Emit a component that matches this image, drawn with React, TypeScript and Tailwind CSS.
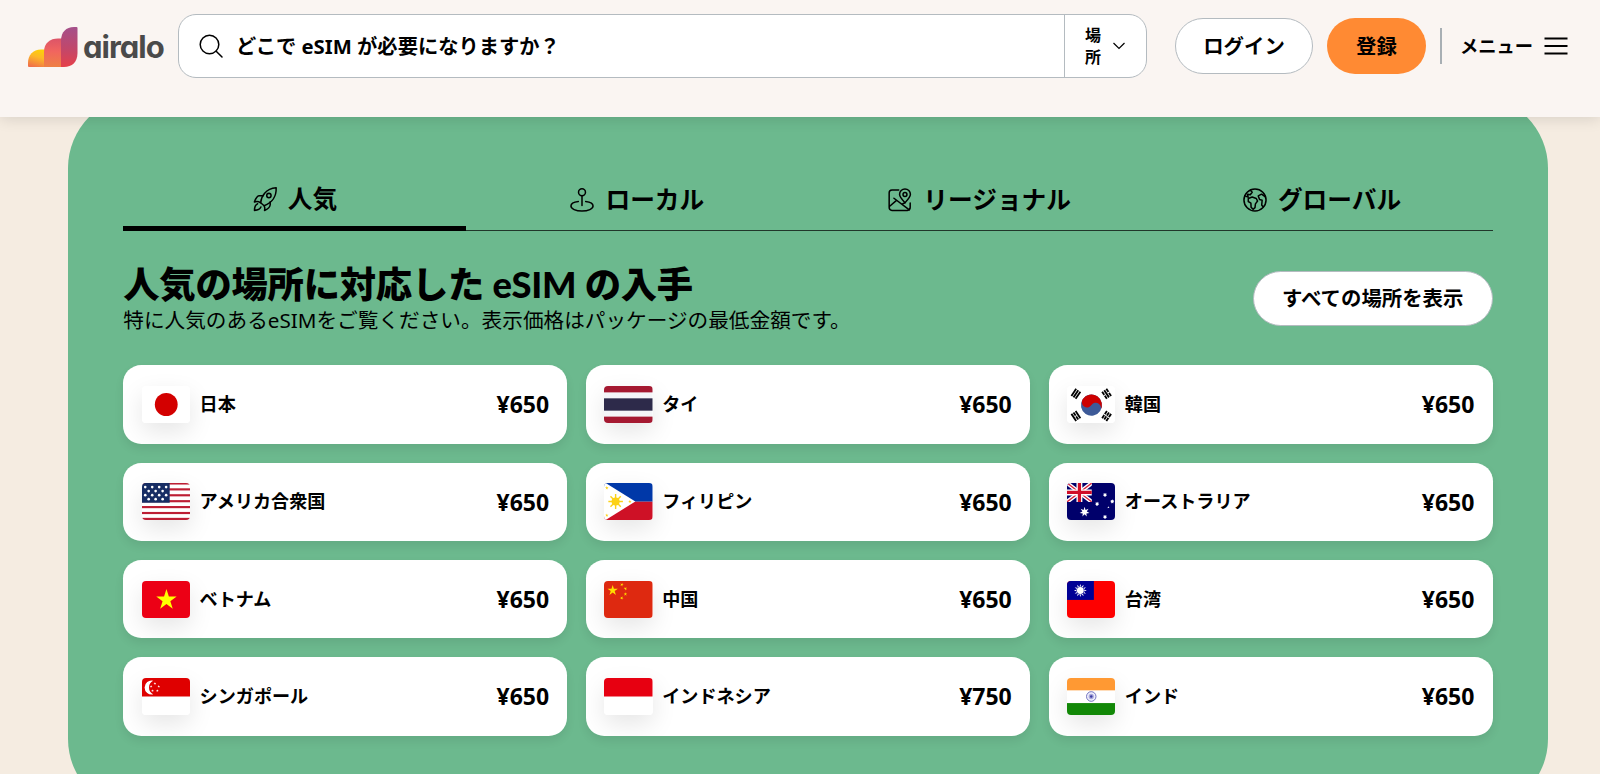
import type { ReactNode } from "react";

type Country = { name: string; price: string; flag: ReactNode };

function starPoints(cx: number, cy: number, r: number, n = 5, inner = 0.382, rotate = 0) {
  const pts: string[] = [];
  for (let i = 0; i < n * 2; i++) {
    const radius = i % 2 === 0 ? r : r * inner;
    const a = (Math.PI * i) / n - Math.PI / 2 + rotate;
    pts.push(`${(cx + radius * Math.cos(a)).toFixed(2)},${(cy + radius * Math.sin(a)).toFixed(2)}`);
  }
  return pts.join(" ");
}

// Flags are drawn on a 48x36 canvas
const japan = (
  <>
    <rect width="48" height="36" fill="#fff" />
    <circle cx="24" cy="18" r="11.3" fill="#d30000" />
  </>
);

const thailand = (
  <>
    <rect width="48" height="36" fill="#f4f5f8" />
    <rect width="48" height="6.2" fill="#a51931" />
    <rect y="12" width="48" height="12" fill="#2d2a4a" />
    <rect y="29.8" width="48" height="6.2" fill="#a51931" />
  </>
);

const trigrams = [
  { x: 8.8, y: 7.6, rotate: -56, broken: [false, false, false] },
  { x: 39.2, y: 7.6, rotate: 56, broken: [true, false, true] },
  { x: 8.8, y: 29.2, rotate: 56, broken: [false, true, false] },
  { x: 39.2, y: 29.2, rotate: -56, broken: [true, true, true] },
];

const korea = (
  <>
    <rect width="48" height="36" fill="#fff" />
    <g transform="rotate(33.7 24.2 18.6)">
      <circle cx="24.2" cy="18.6" r="10.4" fill="#3d5a98" />
      <path d="M13.8 18.6a10.4 10.4 0 0 1 20.8 0a5.2 5.2 0 0 0-10.4 0a5.2 5.2 0 0 1-10.4 0z" fill="#cd0000" />
    </g>
    {trigrams.map((t, i) => (
      <g key={i} transform={`translate(${t.x} ${t.y}) rotate(${t.rotate})`} fill="#000">
        {t.broken.map((b, j) => (
          <g key={j}>
            <rect x="-4.2" y={-3.4 + j * 2.5} width="8.4" height="1.8" />
            {b && <rect x="-0.5" y={-3.6 + j * 2.5} width="1" height="2.2" fill="#fff" />}
          </g>
        ))}
      </g>
    ))}
  </>
);

const usa = (
  <>
    <rect width="48" height="36" fill="#fff" />
    {[0, 1, 2, 3, 4, 5, 6].map((i) => (
      <rect key={i} y={-0.6 + i * 5.75} width="48" height="2.1" fill="#bd1e34" />
    ))}
    <rect width="27.4" height="19.2" fill="#172d64" />
    {[4, 3, 4, 3].map((count, row) =>
      Array.from({ length: count }, (_, col) => (
        <circle
          key={`${row}-${col}`}
          cx={(row % 2 === 1 ? 6.6 : 3.2) + col * 6.9}
          cy={4 + row * 3.9}
          r="1.3"
          fill="#fff"
        />
      ))
    )}
  </>
);

const philippines = (
  <>
    <rect width="48" height="18.2" fill="#0038a8" />
    <rect y="18.2" width="48" height="17.8" fill="#ce1126" />
    <path d="M0 -1L31 18L0 37z" fill="#fff" />
    <circle cx="11.5" cy="18" r="4" fill="#fcd116" />
    {[0, 45, 90, 135, 180, 225, 270, 315].map((deg) => (
      <path key={deg} d="M10.8 10.8h1.4v4h-1.4z" fill="#fcd116" transform={`rotate(${deg} 11.5 18)`} />
    ))}
    <polygon points={starPoints(2.8, 4.8, 1.8)} fill="#fcd116" />
    <polygon points={starPoints(2.8, 31.4, 1.8)} fill="#fcd116" />
    <polygon points={starPoints(25.6, 18, 1.8)} fill="#fcd116" />
  </>
);

const australia = (
  <>
    <rect width="48" height="36" fill="#00006b" />
    <svg width="24.6" height="18.4" viewBox="0 0 24.6 18.4">
      <path d="M0 0L24.6 18.4M24.6 0L0 18.4" stroke="#fff" strokeWidth="4" />
      <path d="M0 0L24.6 18.4M24.6 0L0 18.4" stroke="#d8223c" strokeWidth="1.3" />
      <path d="M12.3 0V18.4M0 9.2H24.6" stroke="#fff" strokeWidth="5.8" />
      <path d="M12.3 0V18.4M0 9.2H24.6" stroke="#d00c27" strokeWidth="3.2" />
    </svg>
    <polygon points={starPoints(17.4, 28.2, 5, 7, 0.45)} fill="#fff" />
    <polygon points={starPoints(37.6, 11.6, 2.1, 7, 0.6)} fill="#fff" />
    <polygon points={starPoints(29.8, 20.4, 2.1, 7, 0.6)} fill="#fff" />
    <polygon points={starPoints(44.8, 18, 2.1, 7, 0.6)} fill="#fff" />
    <polygon points={starPoints(37.6, 33, 2.1, 7, 0.6)} fill="#fff" />
    <polygon points={starPoints(41, 23.6, 1.2)} fill="#fff" />
  </>
);

const vietnam = (
  <>
    <rect width="48" height="36" fill="#ec0015" />
    <polygon points={starPoints(24.2, 18.4, 10.6)} fill="#ff0" />
  </>
);

const china = (
  <>
    <rect width="48" height="36" fill="#de2910" />
    <polygon points={starPoints(8.6, 9.2, 5.4)} fill="#ffde00" />
    <polygon points={starPoints(17.6, 3.6, 1.8, 5, 0.382, 0.4)} fill="#ffde00" />
    <polygon points={starPoints(21.2, 7.4, 1.8, 5, 0.382, 0.8)} fill="#ffde00" />
    <polygon points={starPoints(21.2, 12.8, 1.8)} fill="#ffde00" />
    <polygon points={starPoints(17.6, 16.6, 1.8, 5, 0.382, 0.4)} fill="#ffde00" />
  </>
);

const taiwan = (
  <>
    <rect width="48" height="36" fill="#fe0000" />
    <rect width="26.6" height="18.4" fill="#000095" />
    <polygon points={starPoints(13.2, 9.2, 6.4, 12, 0.55)} fill="#fff" />
    <circle cx="13.2" cy="9.2" r="3.9" fill="#000095" />
    <circle cx="13.2" cy="9.2" r="3.4" fill="#fff" />
  </>
);

const singapore = (
  <>
    <rect width="48" height="36" fill="#fff" />
    <rect width="48" height="18" fill="#df0000" />
    <path d="M11 2.6a6.8 6.8 0 1 0 0 13.2a7.4 7.4 0 0 1 0-13.2z" fill="#fff" />
    <polygon points={starPoints(12.8, 5.4, 1.4)} fill="#fff" />
    <polygon points={starPoints(16.6, 8.2, 1.4)} fill="#fff" />
    <polygon points={starPoints(9, 8.2, 1.4)} fill="#fff" />
    <polygon points={starPoints(15.2, 12.4, 1.4)} fill="#fff" />
    <polygon points={starPoints(10.4, 12.4, 1.4)} fill="#fff" />
  </>
);

const indonesia = (
  <>
    <rect width="48" height="36" fill="#fff" />
    <rect width="48" height="18" fill="#e70011" />
  </>
);

const india = (
  <>
    <rect width="48" height="36" fill="#fff" />
    <rect width="48" height="12" fill="#ff9933" />
    <rect y="24.4" width="48" height="11.6" fill="#128807" />
    <circle cx="24" cy="18" r="4.7" fill="#eeeefa" stroke="#5a5ab4" strokeWidth="0.8" />
    <circle cx="24" cy="18" r="2.6" fill="#a9a9dc" />
    <circle cx="24" cy="18" r="1.2" fill="#3c3ca0" />
  </>
);

const countries: Country[] = [
  { name: "日本", price: "¥650", flag: japan },
  { name: "タイ", price: "¥650", flag: thailand },
  { name: "韓国", price: "¥650", flag: korea },
  { name: "アメリカ合衆国", price: "¥650", flag: usa },
  { name: "フィリピン", price: "¥650", flag: philippines },
  { name: "オーストラリア", price: "¥650", flag: australia },
  { name: "ベトナム", price: "¥650", flag: vietnam },
  { name: "中国", price: "¥650", flag: china },
  { name: "台湾", price: "¥650", flag: taiwan },
  { name: "シンガポール", price: "¥650", flag: singapore },
  { name: "インドネシア", price: "¥750", flag: indonesia },
  { name: "インド", price: "¥650", flag: india },
];

const iconProps = {
  viewBox: "0 0 24 24",
  fill: "none",
  stroke: "currentColor",
  strokeWidth: 1.4,
  strokeLinecap: "round" as const,
  strokeLinejoin: "round" as const,
  className: "size-[26px] shrink-0",
};

const tabs = [
  {
    label: "人気",
    icon: (
      <svg {...iconProps}>
        <path d="M8 15.5C8.5 9.5 12.5 2.5 22.3 1.7C22.6 9 19 15.5 11.2 18.2z" />
        <circle cx="15.6" cy="8.8" r="2" />
        <path d="M10.2 9H6.8C4.6 9 3.4 11.5 2.2 14.8C4 14.1 6 14.2 8 15.5M16.8 14.6V17.3C16.6 19.8 14.4 21.4 11.6 22.6C12 21 11.9 19.6 11.2 18.2M5.2 16.4C2.8 17.4 2.3 19.6 2.3 22.5C5 22.4 7.4 21.6 8.2 19.4" />
      </svg>
    ),
  },
  {
    label: "ローカル",
    icon: (
      <svg {...iconProps}>
        <circle cx="12" cy="4.8" r="3.2" />
        <path d="M12 8V17M8.6 13.4C4.6 13.8 1.8 15.4 1.8 17.6C1.8 20.2 6.2 22.2 12 22.2S22.2 20.2 22.2 17.6C22.2 15.4 19.4 13.8 15.4 13.4" />
      </svg>
    ),
  },
  {
    label: "リージョナル",
    icon: (
      <svg {...iconProps}>
        <path d="M10.8 2.8H4.6C3 2.8 2 3.8 2 5.4V18.8C2 20.4 3 21.6 4.6 21.6H18.8C20.4 21.6 21.4 20.4 21.4 18.8V14.8M6.4 10.4L20.6 21.2M2.2 18L8.8 12.4M13.8 15.8L16.6 14.6" />
        <path d="M16.6 14.6C13.4 11.2 11.6 9 11.6 6.8A5 5 0 0 1 21.6 6.8C21.6 9 19.8 11.2 16.6 14.6z" />
        <circle cx="16.6" cy="6.9" r="1.8" />
      </svg>
    ),
  },
  {
    label: "グローバル",
    icon: (
      <svg {...iconProps}>
        <circle cx="12" cy="12" r="10.2" />
        <path d="M2.6 8.2L5.6 9.2L5.2 6.8L7.6 7.2L9.4 4.8L7.8 3M5.8 10.6L9.4 9.2L13.2 10.6L14.4 13L12.4 15.6L12 19L10.2 20.6L8.4 18.6L8.2 14.8L5.8 13.4zM21.6 9L18 6.6L15 8.2L16.2 11.6L18.6 12.2L18.2 16.6L19.4 18.4" />
      </svg>
    ),
  },
];

function Logo() {
  return (
    <div className="flex items-center gap-[5px] w-[150px] shrink-0 pt-px">
      <svg viewBox="0 0 50 40" className="w-[50px] h-10 shrink-0">
        <defs>
          <linearGradient id="low" x1="0.6" y1="0" x2="0.3" y2="1">
            <stop offset="0" stopColor="#fccf0a" />
            <stop offset="0.4" stopColor="#fdb827" />
            <stop offset="1" stopColor="#f0704a" />
          </linearGradient>
          <linearGradient id="mid" x1="0.5" y1="0" x2="0.5" y2="1">
            <stop offset="0" stopColor="#dc5468" />
            <stop offset="0.45" stopColor="#f1655f" />
            <stop offset="1" stopColor="#ee8044" />
          </linearGradient>
          <linearGradient id="high" x1="0.5" y1="0" x2="0.5" y2="1">
            <stop offset="0" stopColor="#a4508b" />
            <stop offset="0.55" stopColor="#c2476a" />
            <stop offset="1" stopColor="#e6404a" />
          </linearGradient>
        </defs>
        <path d="M0 39V36C0 28 5 22.5 13 22.5H17V40H1Q0 40 0 39z" fill="url(#low)" />
        <path d="M16 40V25C16 16 22 11.5 30 11.5H34V40z" fill="url(#mid)" />
        <path d="M33 40V14C33 5 38 0 46 0H48.5Q49.5 0 49.5 1V26C49.5 35 44 40 36 40z" fill="url(#high)" />
      </svg>
      <span className="font-[Inter] [font-feature-settings:'cv11'] font-bold text-[31px] leading-none text-[#4a4a4a] tracking-[-1px]">
        airalo
      </span>
    </div>
  );
}

function Header() {
  return (
    <header className="relative z-10 h-[117px] bg-[#faf5f2] pt-3.5 pl-7 pr-8 shadow-[0_2px_14px_rgba(0,0,0,0.12)]">
      <div className="flex items-center h-16">
        <Logo />
        <div className="flex h-full w-[969px] shrink-0 bg-white border border-[#b4bbc0] rounded-[18px]">
          <div className="flex-1 flex items-center pl-5">
            <svg viewBox="0 0 24 24" fill="none" stroke="currentColor" strokeWidth="1.5" strokeLinecap="round" className="size-6">
              <circle cx="10.5" cy="10.5" r="9.3" />
              <path d="M17.2 17.2L23 23" />
            </svg>
            <span className="ml-[13px] text-[20.3px] font-bold">どこで eSIM が必要になりますか？</span>
          </div>
          <button className="w-[82px] flex items-center border-l border-[#b4bbc0] pl-5 gap-3">
            <span className="w-4 text-base leading-[22px] font-semibold">場所</span>
            <svg viewBox="0 0 12 8" fill="none" stroke="currentColor" strokeWidth="1.2" className="w-3 h-2">
              <path d="M0.5 1L6 6.5L11.5 1" />
            </svg>
          </button>
        </div>
        <button className="ml-7 w-[138px] h-14 shrink-0 rounded-full bg-white border border-[#b4bbc0] text-[20.4px] font-semibold">
          ログイン
        </button>
        <button className="ml-3.5 w-[99px] h-14 shrink-0 rounded-full bg-[#ff8a33] text-[20.4px] font-semibold">登録</button>
        <span className="ml-3.5 w-0.5 h-9 shrink-0 bg-[#a8afb4]" />
        <button className="ml-[18px] flex items-center gap-[11px] text-[18.3px] font-semibold whitespace-nowrap">
          メニュー
          <svg viewBox="0 0 24 18" stroke="currentColor" strokeWidth="2" className="w-6 h-[18px] shrink-0">
            <path d="M0.5 1.5H23.5M0.5 9H23.5M0.5 16.5H23.5" />
          </svg>
        </button>
      </div>
    </header>
  );
}

function CountryCard({ name, price, flag }: Country) {
  return (
    <li className="rounded-[18.3px] shadow-[0_5px_10px_rgba(0,0,0,0.08)]">
      <div className="h-[78.7px] flex items-center px-[18.3px] bg-white rounded-[18.3px] overflow-hidden">
        <div className="w-[48.5px] h-[37px] rounded shadow-[0_9px_24px_rgba(0,0,0,0.1)]">
          <svg viewBox="0 0 48 36" preserveAspectRatio="none" className="size-full rounded">
            {flag}
          </svg>
        </div>
        <span className="ml-[9.5px] flex-1 text-[18.1px] font-semibold">{name}</span>
        <span className="text-[23px] font-bold">{price}</span>
      </div>
    </li>
  );
}

export default function App() {
  return (
    <div lang="ja" className="h-[774px] overflow-hidden bg-[#f5ece1] text-black font-['Noto_Sans','Noto_Sans_CJK_JP',sans-serif]">
      <Header />
      <main className="-mt-[21px] ml-[68px] mr-[52px] h-[715px] rounded-[72px] bg-[#6cb98e] px-[55.3px] pt-[71px]">
        {/* Tabs */}
        <nav className="grid grid-cols-4 h-[64px] border-b border-black/70">
          {tabs.map((tab, i) => (
            <button
              key={tab.label}
              className={`-mb-px flex items-center justify-center gap-2.5 text-[24.7px] font-semibold ${
                i === 0 ? "border-b-[5px] border-black pt-[5px]" : "pt-px"
              }`}
            >
              {tab.icon}
              {tab.label}
            </button>
          ))}
        </nav>

        <div className="flex items-start justify-between pt-9">
          <div>
            <h1 className="font-[Lato,'Noto_Sans_CJK_JP',sans-serif] text-[36.3px] leading-[35px] font-black tracking-[-0.22px]">
              人気の場所に対応した eSIM の入手
            </h1>
            <p className="mt-0.5 text-[20.65px] leading-8">
              特に人気のあるeSIMをご覧ください。表示価格はパッケージの最低金額です。
            </p>
          </div>
          <button className="mt-1 h-[55px] w-[240px] rounded-full bg-white border border-[#b4bbc0] text-[20.4px] font-semibold">
            すべての場所を表示
          </button>
        </div>

        {/* Country list */}
        <ul className="mt-[29.4px] grid grid-cols-3 gap-[18.5px]">
          {countries.map((c) => (
            <CountryCard key={c.name} {...c} />
          ))}
        </ul>
      </main>
    </div>
  );
}
